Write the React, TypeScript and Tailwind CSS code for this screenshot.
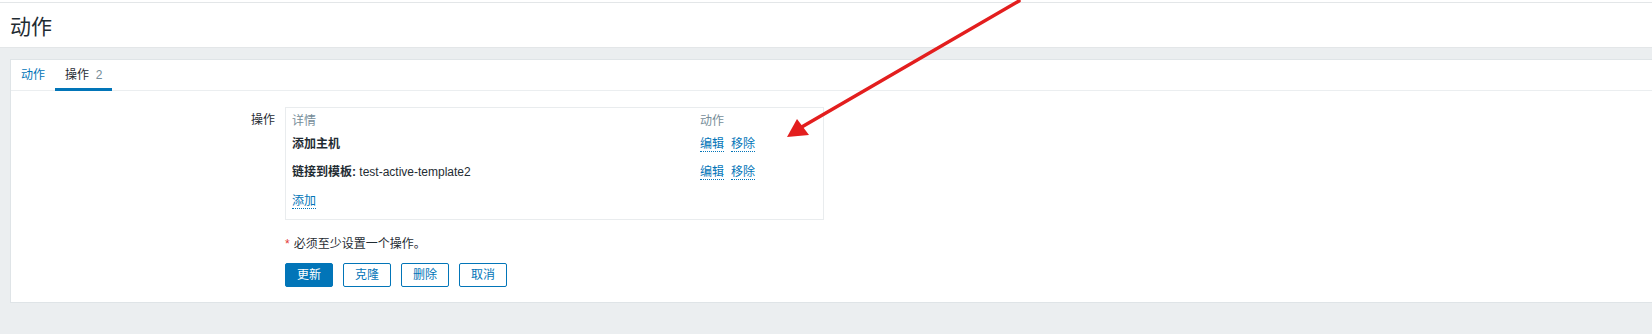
import React from 'react';

const font = { fontFamily: '"Liberation Sans", Arial, "Noto Sans CJK SC", sans-serif' };

function Link({ children }: { children: React.ReactNode }) {
  return (
    <a className="text-[#0275b8] border-b border-dotted border-[#0275b8] leading-[14px] cursor-pointer">
      {children}
    </a>
  );
}

const operations = [
  { key: 'host', label: '添加主机', value: '' },
  { key: 'template', label: '链接到模板:', value: ' test-active-template2' },
];

export default function App() {
  return (
    <div className="relative w-[1652px] h-[334px] overflow-hidden bg-[#ebeef0] text-[12px] text-[#1f2c33]" style={font}>
      {/* Page header */}
      <div className="bg-white pt-[2px]">
        <div className="h-[46px] border-t border-b border-[#e3e6e8] flex items-center pl-[10px] pt-[2px]">
          <h1 className="text-[21px] font-normal text-[#1f2c33] leading-none">动作</h1>
        </div>
      </div>

      {/* Card */}
      <div className="ml-[10px] mt-[11px] bg-white border border-r-0 border-[#dfe4e7] h-[244px]">
        {/* Tabs */}
        <div className="flex h-[31px] border-b border-[#ebeef0]">
          <div className="px-[10px] flex items-center text-[#0275b8]">动作</div>
          <div className="relative px-[10px] flex items-center">
            <span>操作&nbsp;&nbsp;<span className="text-[#768d99]">2</span></span>
            <div className="absolute left-0 right-0 -bottom-px h-[3px] bg-[#0275b8]" />
          </div>
        </div>

        {/* Form */}
        <div className="flex pt-[16px]">
          <div className="w-[274px] pr-[10px] text-right pt-[2px] leading-[22px]">操作</div>
          <div className="flex flex-col">
            <div className="w-[539px] border border-[#e9ecee] pl-[6px] pb-[3px]">
              <div className="flex h-[22px] pt-[4px] items-center text-[#768d99]">
                <div className="w-[408px]">详情</div>
                <div>动作</div>
              </div>
              {operations.map((op) => (
                <div key={op.key} className="flex h-[28px] items-center">
                  <div className="w-[408px]">
                    <span className="font-bold">{op.label}</span>
                    {op.value}
                  </div>
                  <div className="flex gap-[7px]">
                    <Link>编辑</Link>
                    <Link>移除</Link>
                  </div>
                </div>
              ))}
              <div className="flex h-[30px] items-center">
                <Link>添加</Link>
              </div>
            </div>

            <div className="mt-[15px] h-[18px] flex items-center">
              <span className="text-[#e33734] mr-[4px]">*</span>
              <span>必须至少设置一个操作。</span>
            </div>

            <div className="flex gap-[10px] mt-[10px]">
              <button className="w-[48px] h-[24px] rounded-[2px] bg-[#0275b8] border border-[#0275b8] text-white text-[12px]">更新</button>
              <button className="w-[48px] h-[24px] rounded-[2px] bg-white border border-[#0275b8] text-[#0275b8] text-[12px]">克隆</button>
              <button className="w-[48px] h-[24px] rounded-[2px] bg-white border border-[#0275b8] text-[#0275b8] text-[12px]">删除</button>
              <button className="w-[48px] h-[24px] rounded-[2px] bg-white border border-[#0275b8] text-[#0275b8] text-[12px]">取消</button>
            </div>
          </div>
        </div>
      </div>

      {/* Red annotation arrow */}
      <svg className="absolute left-0 top-0 pointer-events-none" width="1652" height="334">
        <line x1="1019" y1="1" x2="800" y2="128" stroke="#e31e1e" strokeWidth="3.5" strokeLinecap="round" />
        <polygon points="787,137 797,119 809,135" fill="#e31e1e" />
      </svg>
    </div>
  );
}
